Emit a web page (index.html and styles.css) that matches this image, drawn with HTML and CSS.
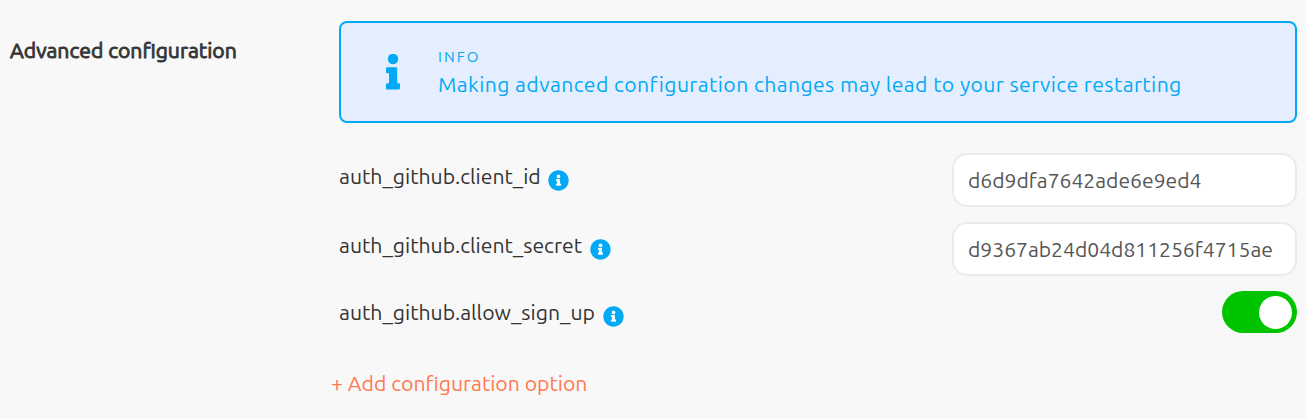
FILE: index.html
```html
<!DOCTYPE html>
<html lang="en">
<head>
<meta charset="utf-8">
<title>Advanced configuration</title>
<link rel="stylesheet" href="styles.css">
</head>
<body>
<svg width="0" height="0" class="sprite" aria-hidden="true">
  <symbol id="info-circle" viewBox="0 0 512 512">
    <path d="M256 8C119 8 8 119 8 256s111 248 248 248 248-111 248-248S393 8 256 8zm0 102a46 46 0 1 1 0 92 46 46 0 0 1 0-92zm62 264c0 7-5 12-12 12H206c-7 0-12-5-12-12v-30c0-7 5-12 12-12h14v-56h-14c-7 0-12-5-12-12v-30c0-7 5-12 12-12h74c7 0 12 5 12 12v98h14c7 0 12 5 12 12v30z"/>
  </symbol>
</svg>
<section class="settings">
  <h2 class="title">Advanced configuration</h2>
  <div class="content">
    <div class="notice">
      <svg class="notice-icon" viewBox="0 0 14 37"><circle cx="7" cy="5" r="5.200"/><path d="M1.200 13.300H10Q11.200 13.300 11.200 14.500V29.300H12.800Q14 29.300 14 30.500V34.300Q14 35.500 12.800 35.500H1.200Q0 35.500 0 34.300V30.500Q0 29.300 1.200 29.300H3V19.300H1.200Q0 19.300 0 18.100V14.500Q0 13.300 1.200 13.300Z"/></svg>
      <div class="notice-body">
        <div class="notice-label">INFO</div>
        <div class="notice-text">Making advanced configuration changes may lead to your service restarting</div>
      </div>
    </div>
    <div class="option">
      <label class="name" for="client-id">auth_github.client_id</label>
      <svg class="help"><use href="#info-circle"/></svg>
      <input class="field" id="client-id" type="text" value="d6d9dfa7642ade6e9ed4">
    </div>
    <div class="option">
      <label class="name" for="client-secret">auth_github.client_secret</label>
      <svg class="help"><use href="#info-circle"/></svg>
      <input class="field" id="client-secret" type="text" value="d9367ab24d04d811256f4715ae">
    </div>
    <div class="option option-toggle">
      <span class="name">auth_github.allow_sign_up</span>
      <svg class="help"><use href="#info-circle"/></svg>
      <span class="toggle" role="switch" aria-checked="true"><span class="knob"></span></span>
    </div>
    <a class="add">+ Add configuration option</a>
  </div>
</section>
</body>
</html>
```
FILE: styles.css
```css
* { box-sizing: border-box; }
body {
  margin: 0;
  background: #f8f8f8;
  color: #333;
  font-family: Ubuntu, "Noto Sans", sans-serif;
  font-size: 21.2px;
  line-height: 28px;
}
.sprite { display: block; }
.settings { display: flex; padding: 21px 9px 0 10px; }
.title {
  width: 329px;
  margin: 16px 0 0;
  font-size: 21.2px;
  line-height: 27px;
  font-weight: 400;
  -webkit-text-stroke: 0.9px #363636;
  white-space: nowrap;
}
.content { flex: 1; min-width: 0; }
.notice {
  display: flex;
  height: 102px;
  margin-bottom: 30px;
  padding: 24px 0 0 45px;
  border: 2px solid #03a9f4;
  border-radius: 8px;
  background: #e5eeff;
  color: #03a9f4;
}
.notice-icon { width: 14px; height: 37px; margin: 7px 38px 0 0; fill: #03a9f4; }
.notice-label { font-size: 15px; line-height: 20px; letter-spacing: 2.1px; }
.notice-text { margin-top: 3px; line-height: 28px; letter-spacing: 0.4px; white-space: nowrap; }
.option { display: flex; align-items: flex-start; height: 54px; margin-bottom: 15px; }
.name { padding-top: 9px; white-space: nowrap; }
.help { width: 21px; height: 21px; margin: 16.5px 0 0 7.7px; fill: #03a9f4; }
.field {
  width: 345px;
  height: 54px;
  margin-left: auto;
  padding: 0 14px;
  border: 2px solid #ebebeb;
  border-radius: 15px;
  background: #fff;
  color: #555;
  font: inherit;
  font-size: 21.1px;
}
.option-toggle { height: 42px; margin-bottom: 36px; }
.option-toggle .name { padding-top: 7px; }
.option-toggle .help { margin-top: 14.5px; }
.toggle {
  display: flex;
  justify-content: flex-end;
  width: 75px;
  height: 42px;
  margin-left: auto;
  padding: 5px;
  border-radius: 21px;
  background: #00c400;
}
.knob { width: 33px; height: 33px; border-radius: 50%; background: #fff; }
.add { display: block; margin-left: -8px; color: #ff7950; white-space: nowrap; }
```
